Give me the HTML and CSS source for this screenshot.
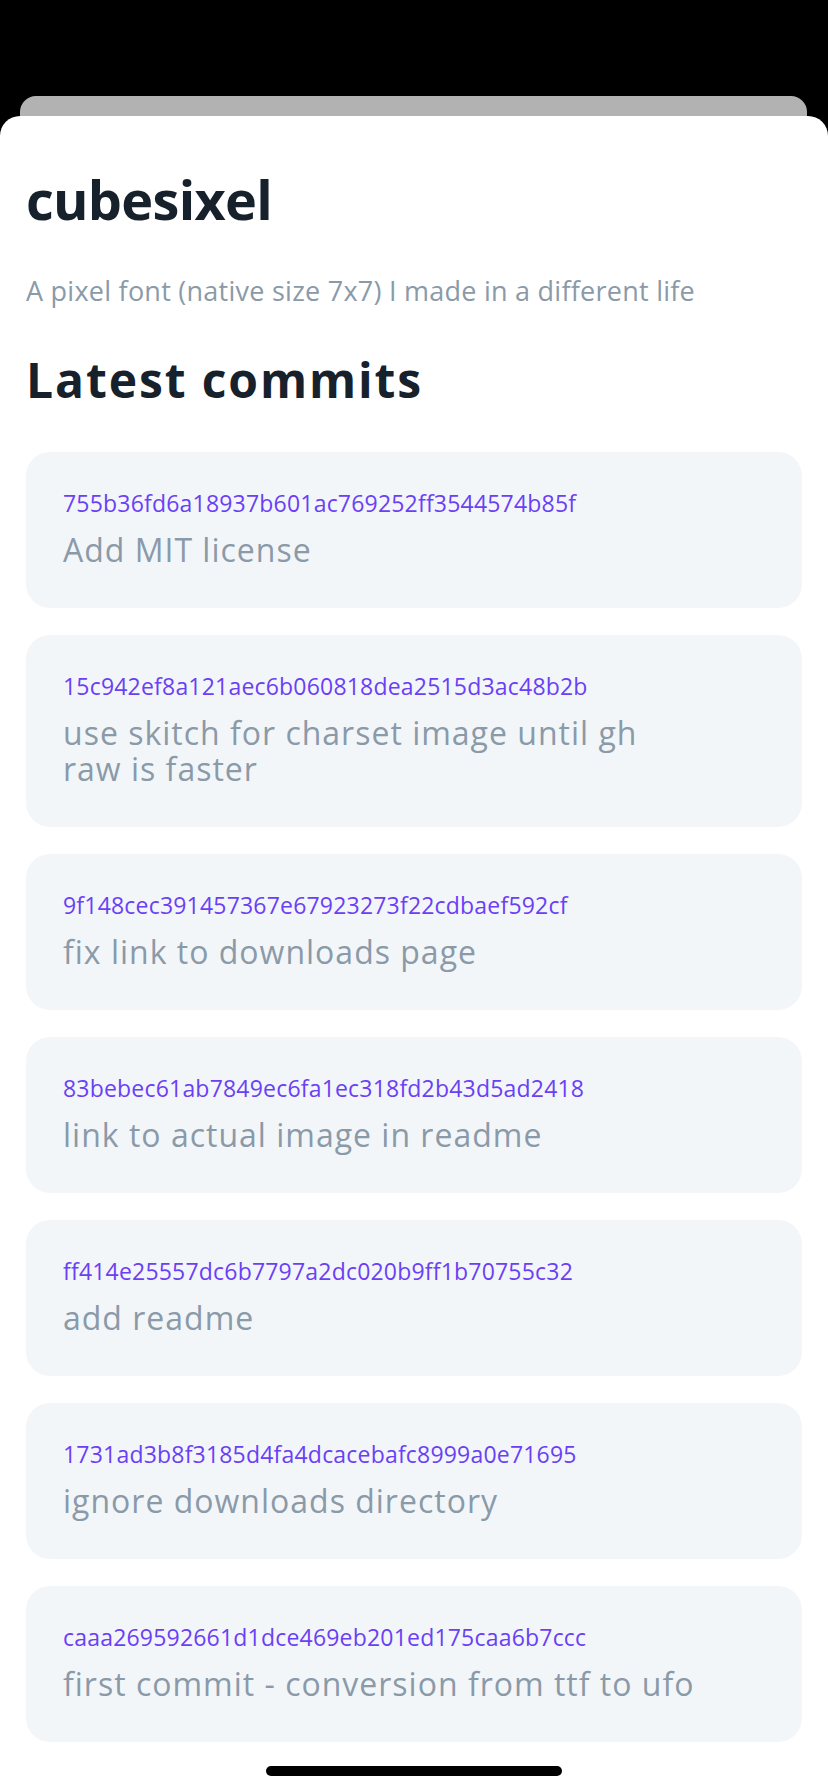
FILE: index.html
```html
<!DOCTYPE html>
<html lang="en">
<head>
<meta charset="utf-8">
<title>cubesixel</title>
<link rel="stylesheet" href="styles.css">
</head>
<body>
<div class="screen">
  <div class="backcard"></div>
  <main class="sheet">
    <h1 class="title">cubesixel</h1>
    <p class="subtitle">A pixel font (native size 7x7) I made in a different life</p>
    <h2 class="section">Latest commits</h2>
    <ul class="commits">
      <li class="commit"><span class="hash">755b36fd6a18937b601ac769252ff3544574b85f</span><span class="msg">Add MIT license</span></li>
      <li class="commit"><span class="hash">15c942ef8a121aec6b060818dea2515d3ac48b2b</span><span class="msg">use skitch for charset image until gh raw is faster</span></li>
      <li class="commit"><span class="hash">9f148cec391457367e67923273f22cdbaef592cf</span><span class="msg">fix link to downloads page</span></li>
      <li class="commit"><span class="hash">83bebec61ab7849ec6fa1ec318fd2b43d5ad2418</span><span class="msg">link to actual image in readme</span></li>
      <li class="commit"><span class="hash">ff414e25557dc6b7797a2dc020b9ff1b70755c32</span><span class="msg">add readme</span></li>
      <li class="commit"><span class="hash">1731ad3b8f3185d4fa4dcacebafc8999a0e71695</span><span class="msg">ignore downloads directory</span></li>
      <li class="commit"><span class="hash">caaa269592661d1dce469eb201ed175caa6b7ccc</span><span class="msg">first commit - conversion from ttf to ufo</span></li>
    </ul>
  </main>
  <div class="home-indicator"></div>
</div>
</body>
</html>
```

FILE: styles.css
```css
* { box-sizing: border-box; }
html, body { margin: 0; padding: 0; background: #000; }
body { font-family: "Open Sans", "Noto Sans", sans-serif; }

.screen {
  position: relative;
  width: 828px;
  height: 1792px;
  overflow: hidden;
  display: flex;
  flex-direction: column;
  padding-top: 96px;
  background: #000;
}

.backcard {
  flex: none;
  height: 40px;
  margin: 0 21px 0 20px;
  background: #b2b2b2;
  border-radius: 16px 16px 0 0;
}

.sheet {
  flex: 1;
  margin-top: -20px;
  background: #fff;
  border-radius: 20px 20px 0 0;
  padding: 51px 26px 0 26px;
  display: flex;
  flex-direction: column;
}

.title {
  margin: 0;
  font-size: 54px;
  line-height: 64px;
  font-weight: 700;
  letter-spacing: -0.7px;
  color: #17212b;
}

.subtitle {
  margin: 40px 0 0 0;
  font-size: 27px;
  line-height: 40px;
  font-weight: 400;
  letter-spacing: 0.25px;
  color: #8a9aa8;
}

.section {
  margin: 40px 0 0 0;
  font-size: 48px;
  line-height: 58px;
  font-weight: 700;
  letter-spacing: 1.9px;
  color: #17212b;
}

.commits {
  list-style: none;
  margin: 43px 0 0 0;
  padding: 0;
  display: flex;
  flex-direction: column;
  gap: 27px;
}

.commit {
  background: #f3f6f9;
  border-radius: 24px;
  padding: 33px 36px 40px 37px;
  display: flex;
  flex-direction: column;
  gap: 11px;
}

.hash {
  font-size: 23px;
  line-height: 36px;
  letter-spacing: 0.2px;
  color: #6a3ff5;
}

.msg {
  max-width: 636px;
  font-size: 32px;
  line-height: 36px;
  letter-spacing: 1px;
  color: #8a9aa8;
}

.home-indicator {
  position: absolute;
  left: 266px;
  bottom: 16px;
  width: 296px;
  height: 10px;
  border-radius: 5px;
  background: #000;
}
```
